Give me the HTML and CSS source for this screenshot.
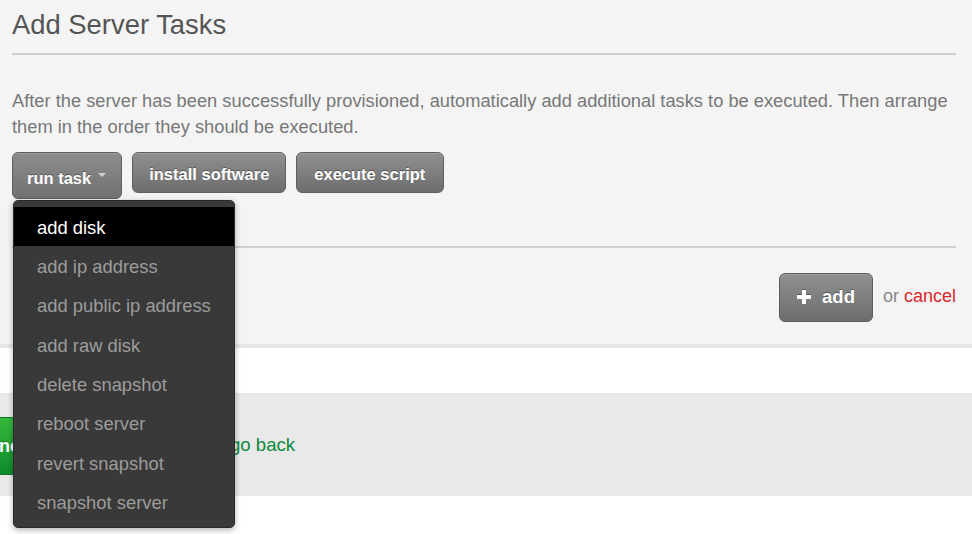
FILE: index.html
```html
<!DOCTYPE html>
<html>
<head>
<meta charset="utf-8">
<link rel="stylesheet" href="styles.css">
</head>
<body>
<section class="panel">
  <h1 class="title">Add Server Tasks</h1>
  <div class="rule"></div>
  <p class="intro">After the server has been successfully provisioned, automatically add additional tasks to be executed. Then arrange them in the order they should be executed.</p>
  <div class="btn-row">
    <div class="dropdown-wrap">
      <button class="btn btn-open">run task<span class="caret"></span></button>
      <ul class="menu">
        <li class="menu-item active">add disk</li>
        <li class="menu-item">add ip address</li>
        <li class="menu-item">add public ip address</li>
        <li class="menu-item">add raw disk</li>
        <li class="menu-item">delete snapshot</li>
        <li class="menu-item">reboot server</li>
        <li class="menu-item">revert snapshot</li>
        <li class="menu-item">snapshot server</li>
      </ul>
    </div>
    <button class="btn">install software</button>
    <button class="btn btn-exec">execute script</button>
  </div>
  <div class="rule rule-2"></div>
  <div class="add-row">
    <button class="btn btn-add"><svg class="plus" viewBox="0 0 14 14" width="14" height="14"><path d="M5 0h4v5h5v4H9v5H5V9H0V5h5z" fill="#fff"/></svg>add</button>
    <span class="or">or <a class="cancel" href="#">cancel</a></span>
  </div>
</section>
<div class="spacer"></div>
<section class="footer-band">
  <button class="btn-next">next step</button>
  <span class="or or-back">or</span>
  <a class="back" href="#">go back</a>
</section>
</body>
</html>
```
FILE: styles.css
```css
* { box-sizing: border-box; }
html, body { margin: 0; padding: 0; background: #fff; }
body {
  font-family: "Liberation Sans", Arial, sans-serif;
  color: #777;
  overflow: hidden;
  width: 972px;
  height: 534px;
}
.panel {
  background: #f4f4f4;
  padding: 11px 16px 22px 12px;
  border-bottom: 4px solid #e6e6e6;
}
.title {
  margin: 0;
  font-size: 27.4px;
  line-height: 28px;
  font-weight: normal;
  color: #555;
}
.rule {
  height: 2px;
  background: #cfcfcf;
  margin-top: 14px;
}
.intro {
  margin: 32.5px 0 12.5px;
  font-size: 18.3px;
  line-height: 26px;
  color: #777;
}
.btn-row {
  display: flex;
  align-items: flex-start;
  gap: 10px;
}
.dropdown-wrap { position: relative; }
.btn {
  font-family: "Liberation Sans", Arial, sans-serif;
  font-weight: bold;
  font-size: 16.5px;
  line-height: 19px;
  color: #fff;
  text-shadow: 0 -1px 0 rgba(0,0,0,0.35);
  background: linear-gradient(#909090, #6d6d6d);
  border: 1px solid #5f5f5f;
  border-radius: 6px;
  padding: 12px 16px 8px;
  box-shadow: inset 0 1px 0 rgba(255,255,255,0.15);
  cursor: pointer;
  display: inline-flex;
  align-items: flex-start;
}
.btn-exec { padding-left: 17px; padding-right: 18px; }
.btn-open {
  padding: 16px 15px 10px 14px;
  background: linear-gradient(#8c8c8c, #727272);
}
.caret {
  display: inline-block;
  width: 0; height: 0;
  border-left: 4px solid transparent;
  border-right: 4px solid transparent;
  border-top: 4px solid #d0d0d0;
  margin-left: 7px;
  margin-top: 4px;
}
.menu {
  position: absolute;
  left: 1px;
  top: 48px;
  width: 222px;
  margin: 0;
  padding: 6px 0 5px;
  list-style: none;
  background: #393939;
  border: 1px solid #2a2a2a;
  border-radius: 5px;
  box-shadow: 0 2px 6px rgba(0,0,0,0.3);
  z-index: 10;
}
.menu-item {
  font-size: 18.4px;
  line-height: 20.7px;
  padding: 10.5px 23px 8.2px;
  color: #9c9c9c;
  white-space: nowrap;
}
.menu-item.active {
  background: #000;
  color: #fff;
}
.rule-2 { margin-top: 47px; }
.add-row {
  display: flex;
  justify-content: flex-end;
  align-items: center;
  gap: 10px;
  margin-top: 25px;
}
.btn-add {
  font-size: 18.5px;
  line-height: 21.3px;
  padding: 12px 17px 14px;
  align-items: center;
}
.plus { margin-right: 11px; filter: drop-shadow(0 -1px 0 rgba(0,0,0,0.3)); }
.or {
  font-size: 18px;
  color: #888;
  margin-top: -3px;
}
.cancel { color: #d7262c; text-decoration: none; }
.spacer { height: 45px; }
.footer-band {
  background: #e9e9e9;
  height: 103px;
  display: flex;
  align-items: center;
}
.btn-next {
  font-family: "Liberation Sans", Arial, sans-serif;
  font-weight: bold;
  font-size: 18px;
  color: #fff;
  background: linear-gradient(#36b93d, #0f8a2c);
  border: 1px solid #0b7a26;
  border-radius: 6px;
  height: 58px;
  width: 215px;
  margin-left: -20px;
  padding: 0 18px;
  text-align: left;
  text-shadow: 0 -1px 0 rgba(0,0,0,0.25);
  margin-top: 3px;
}
.or-back { margin: 0 0 0 14px; }
.back {
  font-size: 18.6px;
  color: #0b8a3b;
  text-decoration: none;
  margin-left: 5px;
}
```
